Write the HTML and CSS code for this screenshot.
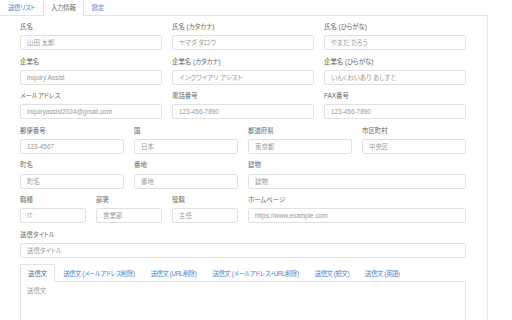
FILE: index.html
```html
<!DOCTYPE html>
<html lang="ja">
<head>
<meta charset="utf-8">
<link rel="stylesheet" href="styles.css">
</head>
<body>
<div class="wrap">
  <ul class="tabs">
    <li class="tab">送信リスト</li>
    <li class="tab active">入力情報</li>
    <li class="tab">設定</li>
  </ul>
  <div class="panel">
    <div class="grid">
      <div class="field c4"><div class="label">氏名</div><div class="input">山田 太郎</div></div>
      <div class="field c4"><div class="label">氏名 (カタカナ)</div><div class="input">ヤマダ タロウ</div></div>
      <div class="field c4"><div class="label">氏名 (ひらがな)</div><div class="input">やまだ たろう</div></div>

      <div class="field c4"><div class="label">企業名</div><div class="input">Inquiry Assist</div></div>
      <div class="field c4"><div class="label">企業名 (カタカナ)</div><div class="input">インクワイアリ アシスト</div></div>
      <div class="field c4"><div class="label">企業名 (ひらがな)</div><div class="input">いんくわいあり あしすと</div></div>

      <div class="field c4"><div class="label">メールアドレス</div><div class="input">inquiryassist2024@gmail.com</div></div>
      <div class="field c4"><div class="label">電話番号</div><div class="input">123-456-7890</div></div>
      <div class="field c4"><div class="label">FAX番号</div><div class="input">123-456-7890</div></div>

      <div class="field c3"><div class="label">郵便番号</div><div class="input">123-4567</div></div>
      <div class="field c3"><div class="label">国</div><div class="input">日本</div></div>
      <div class="field c3"><div class="label">都道府県</div><div class="input">東京都</div></div>
      <div class="field c3"><div class="label">市区町村</div><div class="input">中央区</div></div>

      <div class="field c3"><div class="label">町名</div><div class="input">町名</div></div>
      <div class="field c3"><div class="label">番地</div><div class="input">番地</div></div>
      <div class="field c6"><div class="label">建物</div><div class="input">建物</div></div>

      <div class="field c2"><div class="label">職種</div><div class="input">IT</div></div>
      <div class="field c2"><div class="label">部署</div><div class="input">営業部</div></div>
      <div class="field c2"><div class="label">役職</div><div class="input">主任</div></div>
      <div class="field c6"><div class="label">ホームページ</div><div class="input">https://www.example.com</div></div>

      <div class="field c12"><div class="label">送信タイトル</div><div class="input">送信タイトル</div></div>

      <div class="c12 body">
        <ul class="subtabs">
          <li class="subtab active">送信文</li>
          <li class="subtab">送信文 (メールアドレス削除)</li>
          <li class="subtab">送信文 (URL削除)</li>
          <li class="subtab">送信文 (メールアドレス+URL削除)</li>
          <li class="subtab">送信文 (短文)</li>
          <li class="subtab">送信文 (英語)</li>
        </ul>
        <div class="textarea">送信文</div>
      </div>
    </div>
  </div>
</div>
</body>
</html>
```

FILE: styles.css
```css
html, body {
  margin: 0;
  padding: 0;
  background: #fff;
}
body {
  font-family: "Liberation Sans", "Noto Sans CJK JP", sans-serif;
  font-feature-settings: "palt";
  font-size: 6.4px;
  color: #666;
  overflow: hidden;
  height: 320px;
}
.wrap {
  width: 488px;
}
.tabs {
  list-style: none;
  margin: 0;
  padding: 0;
  display: flex;
  height: 15px;
  border-bottom: 1px solid #e3e3e3;
}
.tab {
  box-sizing: border-box;
  padding: 0 7px;
  height: 15px;
  line-height: 15px;
  color: #4a89c8;
  border: 1px solid transparent;
  border-top: 0;
  border-bottom: 0;
  white-space: nowrap;
  letter-spacing: -0.3px;
}
.tab.active {
  color: #666;
  background: #fff;
  border-color: #e3e3e3;
  height: 16px;
}
.panel {
  box-sizing: border-box;
  width: 488px;
  height: 304px;
  padding: 6px 21px 0 20px;
  border-right: 1px solid #e6e6e6;
}
.grid {
  display: grid;
  grid-template-columns: repeat(12, 1fr);
  column-gap: 10px;
  row-gap: 6.3px;
}
.c2 { grid-column: span 2; }
.c3 { grid-column: span 3; }
.c4 { grid-column: span 4; }
.c6 { grid-column: span 6; }
.c12 { grid-column: span 12; }
.label {
  height: 10px;
  line-height: 10px;
  margin-bottom: 3.3px;
  color: #666;
  white-space: nowrap;
}
.input {
  box-sizing: border-box;
  height: 15px;
  line-height: 13px;
  border: 1px solid #e1e1e1;
  border-radius: 2px;
  padding: 0 6px;
  color: #999;
  white-space: nowrap;
  overflow: hidden;
}
.subtabs {
  list-style: none;
  margin: 0;
  padding: 0;
  display: flex;
  height: 17px;
  border-bottom: 1px solid #e3e3e3;
}
.subtab {
  padding: 0 7px;
  height: 17px;
  line-height: 18px;
  color: #4a89c8;
  white-space: nowrap;
  letter-spacing: -0.45px;
  border: 1px solid transparent;
  border-bottom: 0;
  box-sizing: border-box;
}
.subtab.active {
  color: #666;
  background: #fff;
  border-color: #e3e3e3;
  height: 18px;
  letter-spacing: 0;
}
.textarea {
  box-sizing: border-box;
  height: 60px;
  border: 1px solid #e1e1e1;
  border-top: 0;
  padding: 4px 6px;
  line-height: 9px;
  color: #999;
}
```
